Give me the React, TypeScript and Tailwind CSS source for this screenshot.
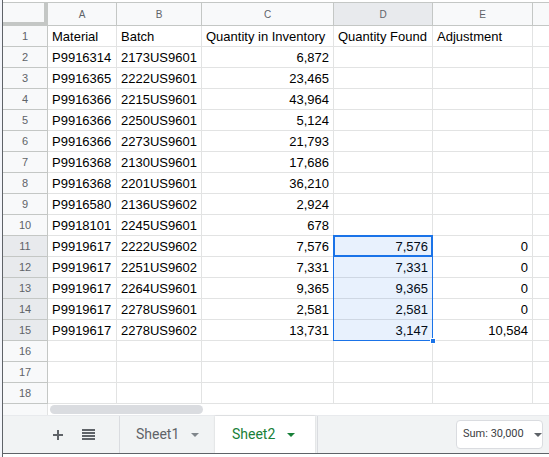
import React from "react";

const cols = [
  { key: "A", w: "w-[69px]" },
  { key: "B", w: "w-[85px]" },
  { key: "C", w: "w-[132px]" },
  { key: "D", w: "w-[99px]" },
  { key: "E", w: "w-[100px]" },
];

type Row = [string, string, string, string, string];

const rows: Row[] = [
  ["Material", "Batch", "Quantity in Inventory", "Quantity Found", "Adjustment"],
  ["P9916314", "2173US9601", "6,872", "", ""],
  ["P9916365", "2222US9601", "23,465", "", ""],
  ["P9916366", "2215US9601", "43,964", "", ""],
  ["P9916366", "2250US9601", "5,124", "", ""],
  ["P9916366", "2273US9601", "21,793", "", ""],
  ["P9916368", "2130US9601", "17,686", "", ""],
  ["P9916368", "2201US9601", "36,210", "", ""],
  ["P9916580", "2136US9602", "2,924", "", ""],
  ["P9918101", "2245US9601", "678", "", ""],
  ["P9919617", "2222US9602", "7,576", "7,576", "0"],
  ["P9919617", "2251US9602", "7,331", "7,331", "0"],
  ["P9919617", "2264US9601", "9,365", "9,365", "0"],
  ["P9919617", "2278US9601", "2,581", "2,581", "0"],
  ["P9919617", "2278US9602", "13,731", "3,147", "10,584"],
  ["", "", "", "", ""],
  ["", "", "", "", ""],
  ["", "", "", "", ""],
];

function Caret({ className }: { className: string }) {
  return (
    <svg width="8" height="4" viewBox="0 0 8 4" className={className}>
      <path d="M0 0h8L4 4z" fill="currentColor" />
    </svg>
  );
}

export default function App() {
  return (
    <div className="relative flex h-[457px] w-[549px] overflow-hidden bg-white font-['Liberation_Sans',Arial,sans-serif] text-[13px] text-black">
      {/* stuff behind the window */}
      <div className="w-[2px] bg-[#f4f6fb]" />

      <div className="flex flex-1 flex-col border-l border-[#5f6368]">
        <div className="h-[2px] bg-white" />

        <div className="relative flex flex-col border-t border-[#c4c7c5]">
          {/* column headers */}
          <div className="flex h-[23px] bg-[#f8f9fa] text-[10px] text-[#5f6368]">
            <div className="w-[45px] border-r-4 border-b-4 border-[#c4c7c5] bg-[#f8f9fa]" />
            {cols.map((c) => (
              <div
                key={c.key}
                className={`${c.w} flex items-center justify-center border-r border-b border-[#c4c7c5] ${
                  c.key === "D" ? "bg-[#e8eaed]" : ""
                }`}
              >
                {c.key}
              </div>
            ))}
            <div className="flex-1 border-b border-[#c4c7c5]" />
          </div>

          {/* body */}
          {rows.map((r, i) => {
            const n = i + 1;
            const inSel = n >= 11 && n <= 15;
            return (
              <div key={n} className="flex h-[21px]">
                <div
                  className={`flex w-[45px] items-center justify-center border-r border-b border-[#c4c7c5] text-[11px] text-[#5f6368] ${
                    inSel ? "bg-[#e8eaed]" : "bg-[#f8f9fa]"
                  }`}
                >
                  {n}
                </div>
                {r.map((v, j) => {
                  const numeric = n > 1 && j >= 2;
                  return (
                    <div
                      key={j}
                      className={`${cols[j].w} overflow-hidden whitespace-nowrap border-r border-b border-[#e2e3e3] px-[4px] pt-[1px] leading-[20px] ${
                        numeric ? "text-right" : "text-left"
                      }`}
                    >
                      {v}
                    </div>
                  );
                })}
                <div className="flex-1 border-b border-[#e2e3e3]" />
              </div>
            );
          })}

          {/* selection D11:D15 */}
          <div className="pointer-events-none absolute left-[330px] top-[232px] h-[106px] w-[100px] border border-[#1a73e8] bg-[rgba(26,115,232,0.1)]">
            <div className="absolute -left-px -top-px h-[22px] w-[100px] border-2 border-[#1a73e8]" />
            <div className="absolute -bottom-[4px] -right-[4px] h-[6px] w-[6px] border border-white bg-[#1a73e8]" />
          </div>
        </div>

        {/* horizontal scrollbar */}
        <div className="flex h-[11px] items-center bg-white">
          <div className="h-full w-[45px] border-r border-[#e2e3e3] bg-[#f8f9fa]" />
          <div className="ml-[2px] h-[9px] w-[153px] rounded-full bg-[#dadce0]" />
        </div>

        {/* sheet bar */}
        <div className="flex h-[38px] items-center border-t border-[#e8eaed] bg-[#f1f3f4] font-['Roboto',Arial,sans-serif]">
          <div className="flex h-full w-[117px] items-center border-r border-[#dadce0]">
            <svg width="12" height="12" viewBox="0 0 12 12" className="ml-[49px] text-[#5f6368]">
              <path d="M6 1v10M1 6h10" stroke="currentColor" strokeWidth="2" />
            </svg>
            <svg width="13" height="11" viewBox="0 0 13 11" className="ml-[18px] text-[#5f6368]">
              <path d="M0 1h13M0 4h13M0 7h13M0 10h13" stroke="currentColor" strokeWidth="2" />
            </svg>
          </div>
          <div className="flex h-full w-[95px] items-center gap-[12px] pl-[16px] text-[14px] text-[#5f6368]">
            <span>Sheet1</span>
            <Caret className="text-[#80868b]" />
          </div>
          <div className="flex h-full w-[100px] items-center gap-[12px] bg-white pl-[17px] text-[14px] text-[#188038] shadow-[0_0_2px_rgba(0,0,0,0.15)]">
            <span>Sheet2</span>
            <Caret className="text-[#188038]" />
          </div>
          <div className="ml-[2px] h-full border-l border-[#dadce0]" />
          <div className="flex-1" />
          <div className="mr-[6px] flex h-[29px] w-[87px] items-center gap-[10px] rounded-[4px] border border-[#dadce0] bg-white pl-[6px] text-[11px] text-[#3c4043]">
            <span>Sum: 30,000</span>
            <Caret className="text-[#5f6368]" />
          </div>
        </div>

        <div className="h-[1px] bg-[#5f6368]" />
        <div className="flex-1 bg-white" />
      </div>
    </div>
  );
}
